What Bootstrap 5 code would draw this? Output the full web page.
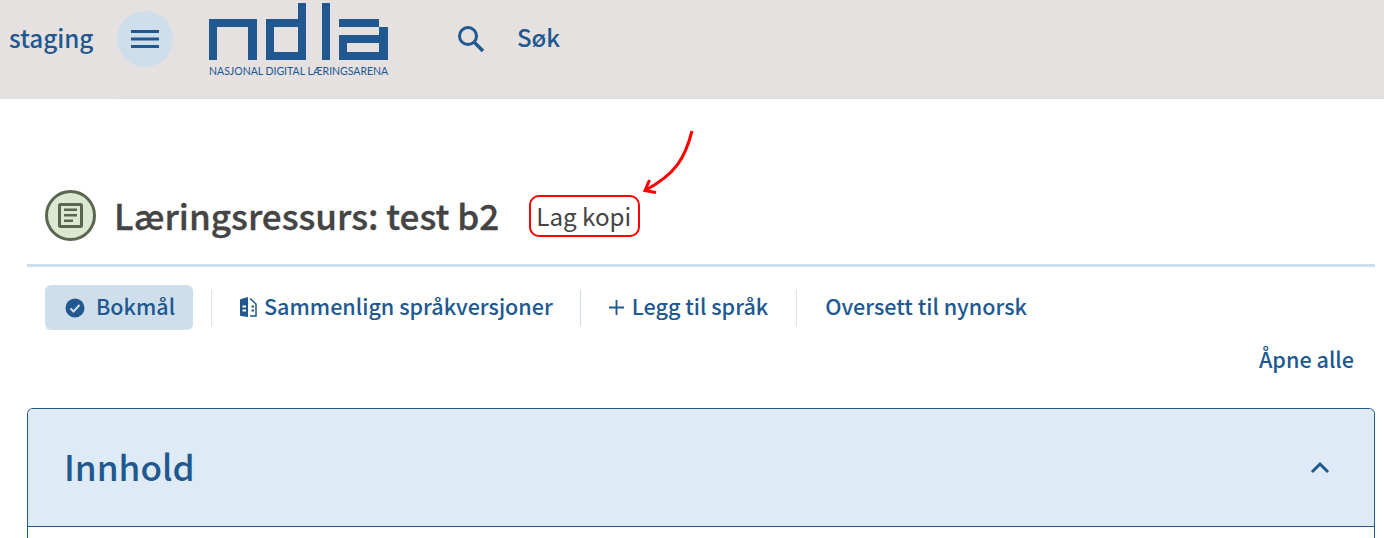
<!DOCTYPE html>
<html lang="nb">
<head>
<meta charset="utf-8">
<title>NDLA</title>
<link href="https://cdn.jsdelivr.net/npm/bootstrap@5.3.0/dist/css/bootstrap.min.css" rel="stylesheet">
<style>
html,body{height:538px;overflow:hidden;background:#fff}
body{font-family:"Noto Sans CJK JP","Noto Sans","Open Sans",sans-serif;color:#20588f;position:relative}
.topbar{height:99px;background:linear-gradient(#cfdae3,#cfdae3) 117px 100%/100% 1px no-repeat,#e6e1e1;padding-left:9px;padding-bottom:21px}
.env-label{font-size:24.3px;font-weight:500;line-height:1;width:108px;padding-bottom:2px}
.menu-round{width:56px;height:56px;border-radius:50%;background:#cfdeeb;border:0;padding:0;margin-bottom:1px}
.brand-box{margin-left:36px;width:180px;margin-top:3px}
.brand-sub{font-family:"Lato",sans-serif;font-size:10.500px;line-height:1;color:#20588f;white-space:nowrap;margin-top:6px}
.glass{margin-left:68px;margin-bottom:1px}
.search-text{font-size:24px;font-weight:500;line-height:1;margin-left:32px;padding-bottom:4px}
.page-body{padding:92px 9px 0 27px}
.title-row{padding-left:18px;height:76px;border-bottom:3px solid #cfdeeb}
.title-mark{width:51px;height:51px;margin-right:18px;margin-top:-1px}
.title-text{font-size:35.050px;font-weight:500;line-height:1;color:#444;margin:0;-webkit-text-stroke:.35px #444;white-space:nowrap;padding-top:6px}
.copy-box{font-size:24.200px;line-height:1;color:#444;border:2px solid #f00;border-radius:10px;margin-left:30px;padding:7px 5px;height:42px;width:111px;white-space:nowrap}
.lang-row{padding-left:18px;margin-top:18px;height:45px}
.lang-item{font-size:21.550px;font-weight:500;line-height:1;white-space:nowrap;color:#20588f}
.lang-label{padding-bottom:4px}
.lang-active{background:#cfdeeb;border-radius:6px;height:45px;width:148px;padding-left:20px;gap:11px}
.lang-sep{width:1px;height:36px;background:#dbe6ef;margin:0 28px 0 27px}
.lang-sep-first{margin-left:18px}
.lang-sep-mid{background:#cfdeeb}
.lang-sep-last{margin-left:28px}
.compare-mark{margin-right:7px}
.open-all{font-size:21.600px;font-weight:500;line-height:1;padding-right:21px;margin-top:18px;height:24px}
.panel-box{margin-top:36px;border:1px solid #20588f;border-bottom:0;border-radius:6px 6px 0 0;height:140px}
.panel-head{height:118px;background:#deeaf6;border-bottom:1px solid #20588f;border-radius:5px 5px 0 0;padding:0 44px 0 36px}
.panel-title{font-size:35.100px;font-weight:500;line-height:1;color:#20588f;margin:0;padding-bottom:4px}
.note-arrow{position:absolute;left:640px;top:128px}
</style>
</head>
<body>
<header class="topbar d-flex align-items-center">
  <span class="env-label">staging</span>
  <button class="menu-round d-flex align-items-center justify-content-center" type="button" aria-label="Meny">
    <svg width="28" height="20" viewBox="0 0 28 20"><path fill="#20588f" d="M0 1h28v3H0zM0 8.500h28v3H0zM0 16h28v3H0z"/></svg>
  </button>
  <div class="brand-box align-self-start">
    <svg class="d-block" width="180" height="57" viewBox="0 0 180 57"><path fill="#20588f" fill-rule="evenodd" d="M0 16h48v41h-9V24H8v33H0zM57 16h32V0h8v57H57zM65 24v25h24V24zM113 0h8v57h-8zM130 16h40v8h9v33h-49V32h40v-8h-40zM138 40v9h32v-9z"/></svg>
    <div class="brand-sub">NASJONAL DIGITAL LÆRINGSARENA</div>
  </div>
  <svg class="glass" width="28" height="28" viewBox="0 0 28 28"><circle cx="11" cy="11" r="8.500" fill="none" stroke="#20588f" stroke-width="3"/><path d="M17 17l9 9" stroke="#20588f" stroke-width="3.500" fill="none"/></svg>
  <span class="search-text">Søk</span>
</header>
<main class="page-body">
  <div class="title-row d-flex align-items-start">
    <svg class="title-mark flex-shrink-0" viewBox="0 0 51 51"><circle cx="25.500" cy="25.500" r="24" fill="#dde8d3" stroke="#5a6650" stroke-width="3"/><rect x="14.500" y="14.500" width="22" height="22" rx="1" fill="none" stroke="#5a6650" stroke-width="3"/><path fill="#5a6650" d="M19 18.500h13V21H19zM19 24h13v2.500H19zM19 29.500h9V32h-9z"/></svg>
    <h1 class="title-text">Læringsressurs: test b2</h1>
    <span class="copy-box mt-1">Lag kopi</span>
  </div>
  <div class="lang-row d-flex align-items-center">
    <span class="lang-item lang-active d-flex align-items-center">
      <svg width="20" height="20" viewBox="0 0 20 20"><circle cx="10" cy="10" r="9.500" fill="#20588f"/><path d="M5.500 10.500l3 3 6-6.500" fill="none" stroke="#cfdeeb" stroke-width="2"/></svg>
      <span class="lang-label">Bokmål</span>
    </span>
    <span class="lang-sep lang-sep-first"></span>
    <span class="lang-item d-flex align-items-center">
      <svg class="compare-mark" width="17" height="22" viewBox="0 0 17 22"><path fill="#20588f" fill-rule="evenodd" d="M1 3l7-2v20l-7-1a1 1 0 0 1-1-1V4a1 1 0 0 1 1-1zM2.500 9.500v2H6v-2zM2.500 13.500v2H6v-2z"/><path fill="none" stroke="#20588f" stroke-width="1.500" d="M10 2.500l6 5.500v12h-6"/><path fill="#20588f" d="M11.500 9.500h2.500v2h-2.500zM11.500 13.500h2.500v2h-2.500z"/></svg>
      <span class="lang-label">Sammenlign språkversjoner</span>
    </span>
    <span class="lang-sep lang-sep-mid"></span>
    <span class="lang-item d-flex align-items-center">
      <svg width="15" height="15" viewBox="0 0 16 16"><path fill="#20588f" d="M7 0h2v7h7v2H9v7H7V9H0V7h7z"/></svg>
      <span class="lang-label ms-2">Legg til språk</span>
    </span>
    <span class="lang-sep lang-sep-last"></span>
    <span class="lang-item lang-label">Oversett til nynorsk</span>
  </div>
  <div class="open-all text-end">Åpne alle</div>
  <section class="panel-box">
    <div class="panel-head d-flex align-items-center justify-content-between">
      <h2 class="panel-title">Innhold</h2>
      <svg width="20" height="13" viewBox="0 0 20 13"><path d="M2 11l8-8 8 8" fill="none" stroke="#20588f" stroke-width="3"/></svg>
    </div>
  </section>
</main>
<svg class="note-arrow" width="56" height="68" viewBox="0 0 56 68"><path d="M52 3C45 30 36 46 5 62.500" fill="none" stroke="#f00" stroke-width="3"/><path d="M9.500 52L5 62.500l11 2" fill="none" stroke="#f00" stroke-width="3"/></svg>
</body>
</html>
